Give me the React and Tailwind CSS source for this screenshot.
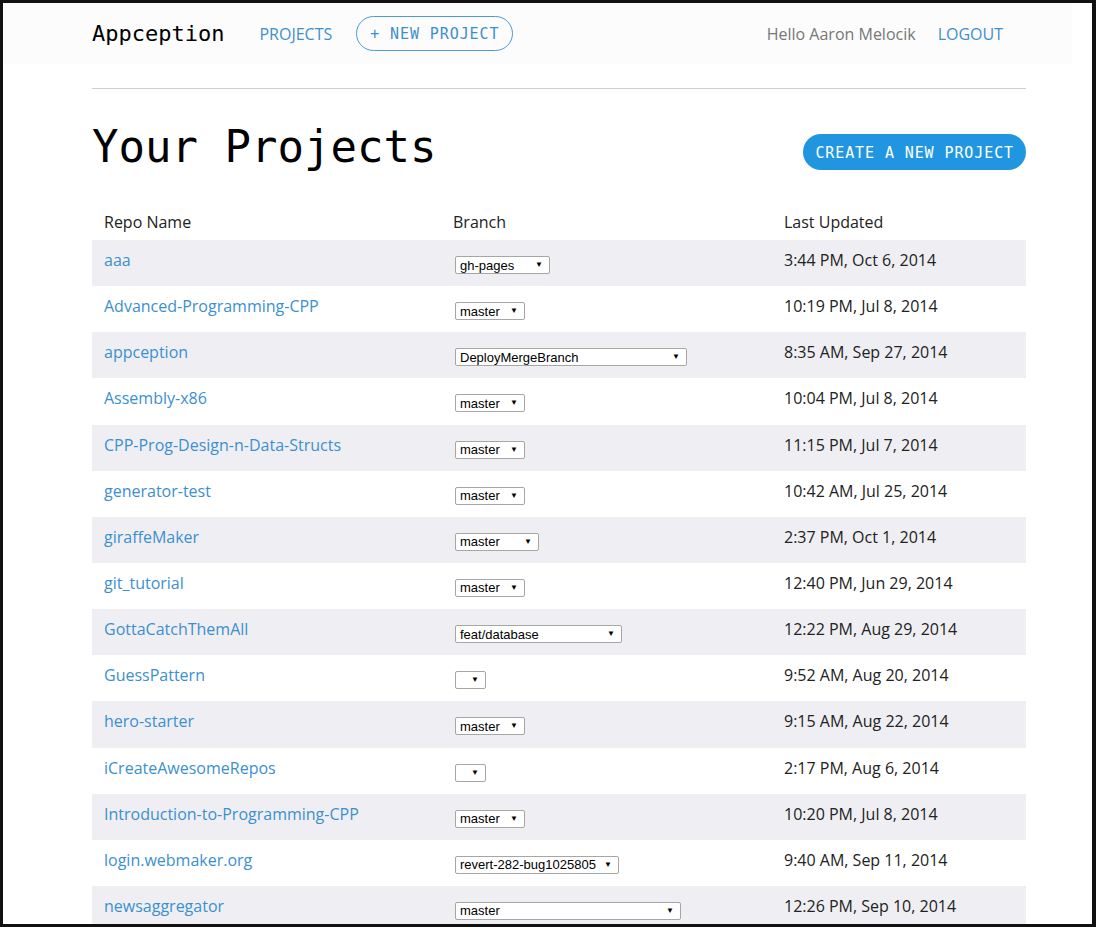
import React from "react";

const repos = [
  { name: "aaa", branch: "gh-pages", w: 95, updated: "3:44 PM, Oct 6, 2014" },
  { name: "Advanced-Programming-CPP", branch: "master", w: 70, updated: "10:19 PM, Jul 8, 2014" },
  { name: "appception", branch: "DeployMergeBranch", w: 232, updated: "8:35 AM, Sep 27, 2014" },
  { name: "Assembly-x86", branch: "master", w: 70, updated: "10:04 PM, Jul 8, 2014" },
  { name: "CPP-Prog-Design-n-Data-Structs", branch: "master", w: 70, updated: "11:15 PM, Jul 7, 2014" },
  { name: "generator-test", branch: "master", w: 70, updated: "10:42 AM, Jul 25, 2014" },
  { name: "giraffeMaker", branch: "master", w: 84, updated: "2:37 PM, Oct 1, 2014" },
  { name: "git_tutorial", branch: "master", w: 70, updated: "12:40 PM, Jun 29, 2014" },
  { name: "GottaCatchThemAll", branch: "feat/database", w: 167, updated: "12:22 PM, Aug 29, 2014" },
  { name: "GuessPattern", branch: "", w: 31, updated: "9:52 AM, Aug 20, 2014" },
  { name: "hero-starter", branch: "master", w: 70, updated: "9:15 AM, Aug 22, 2014" },
  { name: "iCreateAwesomeRepos", branch: "", w: 31, updated: "2:17 PM, Aug 6, 2014" },
  { name: "Introduction-to-Programming-CPP", branch: "master", w: 70, updated: "10:20 PM, Jul 8, 2014" },
  { name: "login.webmaker.org", branch: "revert-282-bug1025805", w: 164, updated: "9:40 AM, Sep 11, 2014" },
  { name: "newsaggregator", branch: "master", w: 226, updated: "12:26 PM, Sep 10, 2014" },
];

const mono = "font-['DejaVu_Sans_Mono','Liberation_Mono',monospace]";
const sans = "font-['Open_Sans','Noto_Sans',sans-serif]";

const BranchSelect = ({ branch, w }) => (
  <div
    className="flex h-[18px] items-center justify-between rounded-[2px] border border-[#a6a6a6] bg-white pl-[4px] pr-[6px] font-['Liberation_Sans',Arial,sans-serif] text-[13px] leading-none text-black"
    style={{ width: w }}
  >
    <span>{branch}</span>
    <span className="text-[8px]">▼</span>
  </div>
);

const App = () => {
  return (
    <div className={`h-[927px] w-[1096px] overflow-hidden border-t-[3px] border-l-[3px] border-r-[4px] border-b-[3px] border-[#111] bg-white ${sans}`}>
      <header className="flex h-[61px] w-[1069px] items-center bg-[#fcfcfc] pl-[89px]">
        <span className={`${mono} text-[22px] leading-none text-black`}>Appception</span>
        <a className="ml-[35px] text-[16px] text-[#3c8fcf]">PROJECTS</a>
        <a className={`ml-[24px] flex h-[35px] items-center rounded-full border border-[#4a9bd6] px-[13px] pt-[2px] ${mono} text-[15px] tracking-[0.9px] text-[#3c8fcf]`}>
          + NEW PROJECT
        </a>
        <span className="ml-auto text-[16px] text-[#777]">Hello Aaron Melocik</span>
        <a className="ml-[22px] mr-[69px] text-[16px] text-[#3c8fcf]">LOGOUT</a>
      </header>

      <main className="ml-[89px] w-[934px]">
        <div className="mt-[24px] h-px bg-[#cfcfcf]" />

        <div className="mt-[36px] flex items-start justify-between">
          <h1 className={`${mono} text-[44px] leading-[44px] text-black`}>Your Projects</h1>
          <button className={`mt-[9px] h-[36px] rounded-full bg-[#2196e0] px-[12px] pt-[2px] ${mono} text-[15px] tracking-[0.9px] text-white`}>
            CREATE A NEW PROJECT
          </button>
        </div>

        <div className="mt-[36px] grid h-[34px] grid-cols-[349px_331px_1fr] pt-[5px] text-[16px] leading-[22px] text-[#222]">
          <div className="pl-[12px]">Repo Name</div>
          <div className="pl-[12px]">Branch</div>
          <div className="pl-[12px]">Last Updated</div>
        </div>

        <div>
          {repos.map((r, i) => (
            <div
              key={r.name}
              className={`grid h-[46.15px] grid-cols-[349px_331px_1fr] text-[16px] leading-[22px] ${i % 2 === 0 ? "bg-[#efeff3]" : "bg-white"}`}
            >
              <div className="pl-[12px] pt-[9px]">
                <a className="text-[#3c8fcf]">{r.name}</a>
              </div>
              <div className="pl-[14px] pt-[16px]">
                <BranchSelect branch={r.branch} w={r.w} />
              </div>
              <div className="pl-[12px] pt-[9px] text-[#222]">{r.updated}</div>
            </div>
          ))}
        </div>
      </main>
    </div>
  );
};

export default App;
